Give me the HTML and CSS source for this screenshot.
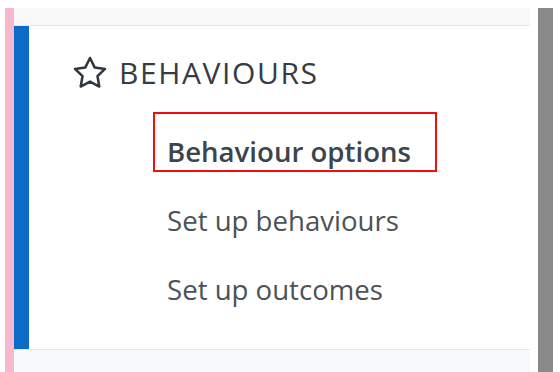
FILE: index.html
```html
<!DOCTYPE html>
<html>
<head>
<meta charset="utf-8">
<link rel="stylesheet" href="styles.css">
</head>
<body>
<div class="page">
  <div class="pink"></div>
  <div class="main">
    <div class="band-top"></div>
    <div class="panel">
      <div class="accent"></div>
      <div class="content">
        <div class="title">
          <svg class="star" width="36" height="36" viewBox="0 0 24 24" fill="none" stroke="currentColor" stroke-width="1.7" stroke-linejoin="round" stroke-linecap="round"><polygon points="12 2 15.09 8.26 22 9.27 17 14.14 18.18 21.02 12 17.77 5.82 21.02 7 14.14 2 9.27 8.91 8.26 12 2"/></svg>
          <span class="title-text">BEHAVIOURS</span>
        </div>
        <ul class="menu">
          <li><a class="item active">Behaviour options</a></li>
          <li><a class="item">Set up behaviours</a></li>
          <li><a class="item">Set up outcomes</a></li>
        </ul>
      </div>
    </div>
    <div class="band-bottom"></div>
  </div>
  <div class="scroll"></div>
</div>
</body>
</html>
```
FILE: styles.css
```css
html, body {
  margin: 0;
  padding: 0;
  background: #ffffff;
}
body {
  font-family: "Open Sans", "Liberation Sans", sans-serif;
}
.page {
  display: flex;
  height: 372px;
  box-sizing: border-box;
  padding-top: 8px;
  padding-left: 5px;
}
.pink {
  width: 9px;
  background: #f8b9cf;
}
.main {
  width: 516px;
  display: flex;
  flex-direction: column;
}
.band-top {
  height: 17px;
  background: #f8f9fb;
  border-bottom: 1px solid #e3e7ec;
}
.panel {
  height: 323px;
  display: flex;
  background: #ffffff;
}
.accent {
  width: 15px;
  background: #0b6bc6;
}
.content {
  flex: 1;
  padding: 27px 0 0 43px;
}
.band-bottom {
  flex: 1;
  background: #f8f9fb;
  border-top: 1px solid #e3e7ec;
}
.scroll {
  width: 15px;
  margin-left: 8px;
  background: #898989;
}
.title {
  display: flex;
  align-items: center;
  height: 40px;
  color: #343c44;
}
.star {
  display: block;
  margin-right: 11px;
  color: #2f373f;
}
.title-text {
  font-size: 30px;
  line-height: 40px;
  letter-spacing: 1.6px;
}
.menu {
  list-style: none;
  margin: 19px 0 0 81px;
  padding: 0;
  display: flex;
  flex-direction: column;
  gap: 9px;
}
.item {
  display: block;
  box-sizing: border-box;
  width: 284px;
  height: 60px;
  padding: 18px 0 0 12px;
  border: 2px solid transparent;
  font-size: 27.6px;
  line-height: 38px;
  color: #4c5257;
}
.item.active {
  border-color: #f20d0d;
  font-weight: 600;
  color: #3c444c;
}
```
